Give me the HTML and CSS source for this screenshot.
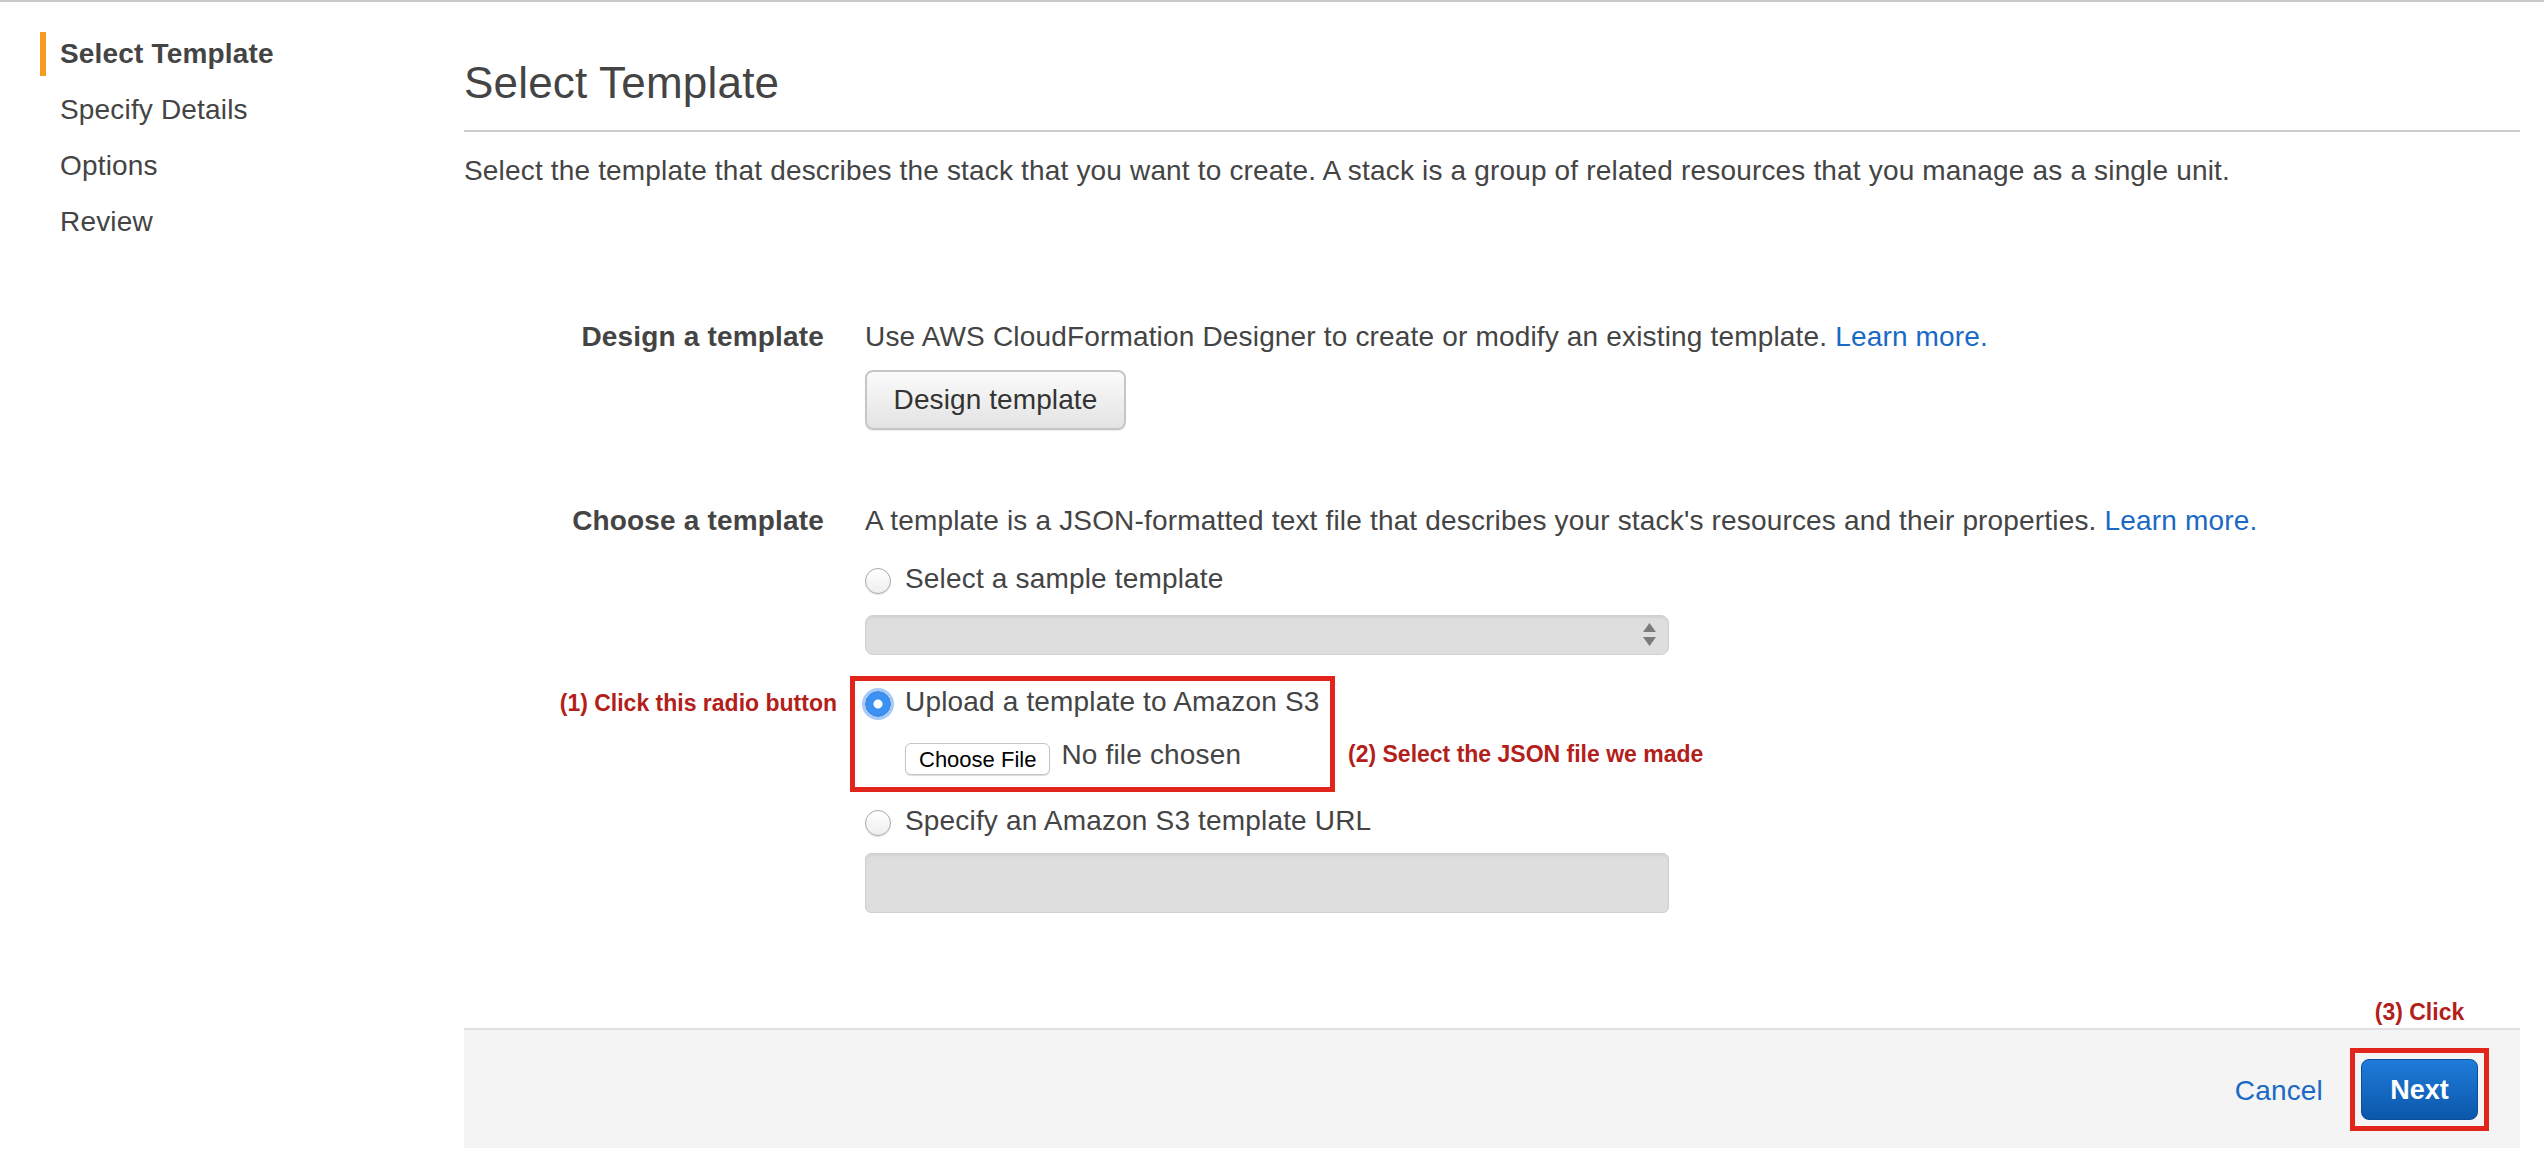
FILE: index.html
```html
<!DOCTYPE html>
<html lang="en">
<head>
<meta charset="utf-8">
<title>Select Template</title>
<link rel="stylesheet" href="styles.css">
</head>
<body>
<div class="topbar"></div>
<div class="page">
  <nav class="steps">
    <div class="step active">Select Template</div>
    <div class="step">Specify Details</div>
    <div class="step">Options</div>
    <div class="step">Review</div>
  </nav>
  <main class="main">
    <h1 class="title">Select Template</h1>
    <p class="intro">Select the template that describes the stack that you want to create. A stack is a group of related resources that you manage as a single unit.</p>

    <div class="form">
      <div class="row row-design">
        <div class="label">Design a template</div>
        <div class="field">
          <div class="desc">Use AWS CloudFormation Designer to create or modify an existing template. <a class="link" href="#">Learn more.</a></div>
          <button class="btn" type="button">Design template</button>
        </div>
      </div>

      <div class="row row-choose">
        <div class="label">Choose a template</div>
        <div class="field">
          <div class="desc">A template is a JSON-formatted text file that describes your stack's resources and their properties. <a class="link" href="#">Learn more.</a></div>
          <div class="option option-first"><span class="radio"></span>Select a sample template</div>
          <div class="select">
            <svg class="arrows" width="13" height="24" viewBox="0 0 13 24"><polygon points="6.5,0 13,9 0,9" fill="#7b7b7b"/><polygon points="0,14 13,14 6.5,23" fill="#7b7b7b"/></svg>
          </div>
          <div class="callout">
            <span class="note note-1">(1) Click this radio button</span>
            <div class="option"><span class="radio checked"></span>Upload a template to Amazon S3</div>
            <div class="file-row"><span class="file-btn">Choose File</span><span class="file-name">No file chosen</span></div>
            <span class="note note-2">(2) Select the JSON file we made</span>
          </div>
          <div class="option option-url"><span class="radio"></span>Specify an Amazon S3 template URL</div>
          <div class="text-input"></div>
        </div>
      </div>
    </div>

    <footer class="footer">
      <a class="cancel" href="#">Cancel</a>
      <div class="next-box">
        <span class="note note-3">(3) Click</span>
        <button class="btn-primary" type="button">Next</button>
      </div>
    </footer>
  </main>
</div>
</body>
</html>
```

FILE: styles.css
```css
html, body {
  margin: 0;
  padding: 0;
  background: #ffffff;
}

body {
  font-family: "Liberation Sans", Arial, Helvetica, sans-serif;
  font-size: 28px;
  letter-spacing: 0.17px;
  color: #444444;
}

.topbar {
  height: 2px;
  background: #c9c9c9;
}

.page {
  display: flex;
}

/* ---------- left steps ---------- */
.steps {
  flex: none;
  width: 464px;
  padding-top: 30px;
  box-sizing: border-box;
}

.step {
  margin-left: 40px;
  height: 44px;
  line-height: 44px;
  border-left: 6px solid transparent;
  padding-left: 14px;
  margin-bottom: 12px;
  white-space: nowrap;
}

.step.active {
  border-left-color: #f89a1f;
  font-weight: bold;
}

/* ---------- main ---------- */
.main {
  flex: none;
  width: 2056px;
}

.title {
  margin: 56px 0 0;
  font-size: 44px;
  letter-spacing: 0.2px;
  line-height: 50px;
  font-weight: normal;
  padding-bottom: 22px;
  border-bottom: 2px solid #cccccc;
}

.intro {
  margin: 19px 0 0;
  line-height: 40px;
}

.form {
  margin-top: 126px;
}

.row {
  display: grid;
  grid-template-columns: 360px 1fr;
  column-gap: 41px;
}

.row-choose {
  margin-top: 71px;
}

.label {
  text-align: right;
  font-weight: bold;
  line-height: 40px;
  white-space: nowrap;
}

.field {
  display: flex;
  flex-direction: column;
  align-items: flex-start;
}

.desc {
  line-height: 40px;
  white-space: nowrap;
}

.link {
  color: #1a69c4;
  text-decoration: none;
}

.btn {
  margin-top: 13px;
  width: 261px;
  height: 60px;
  box-sizing: border-box;
  font-family: inherit;
  font-size: 28px;
  letter-spacing: 0.1px;
  color: #333333;
  background: linear-gradient(#fbfbfb, #e3e3e3);
  border: 2px solid #c6c6c6;
  border-radius: 8px;
  box-shadow: 0 1px 1px rgba(0, 0, 0, 0.08);
  padding: 0;
}

/* radio options */
.option {
  display: flex;
  align-items: center;
  line-height: 40px;
  white-space: nowrap;
}

.option-first {
  margin-top: 18px;
}

.option-url {
  margin-top: 9px;
}

.radio {
  flex: none;
  width: 26px;
  height: 26px;
  box-sizing: border-box;
  border-radius: 50%;
  margin-right: 14px;
  margin-top: 4px;
  border: 1px solid #a9a9a9;
  background: linear-gradient(#ffffff, #eeeeee);
  box-shadow: 0 1px 1px rgba(0, 0, 0, 0.12);
}

.radio.checked {
  border: 1px solid #3583e0;
  background: radial-gradient(circle, #ffffff 0, #ffffff 4px, #3d93f3 5px, #3b8ef0 100%);
  box-shadow: 0 0 0 3px #a6cbf6;
}

/* select */
.select {
  margin-top: 16px;
  width: 804px;
  height: 40px;
  box-sizing: border-box;
  background: #dedede;
  border: 1px solid #d0d0d0;
  border-radius: 8px;
  box-shadow: inset 0 2px 2px rgba(0, 0, 0, 0.05);
  display: flex;
  align-items: center;
  justify-content: flex-end;
  padding-right: 12px;
}

/* red callout */
.callout {
  position: relative;
  margin-top: 21px;
  margin-left: -15px;
  width: 485px;
  box-sizing: border-box;
  border: 5px solid #e1251b;
  padding: 1px 0 10px 10px;
}

.file-row {
  margin-top: 15px;
  margin-left: 40px;
  height: 40px;
  display: flex;
  align-items: center;
}

.file-btn {
  height: 32px;
  line-height: 32px;
  box-sizing: border-box;
  padding: 0 13px;
  font-size: 22px;
  letter-spacing: 0;
  color: #000000;
  background: #ffffff;
  border: 1px solid #c6c6c6;
  border-radius: 6px;
  box-shadow: 0 1px 1px rgba(0, 0, 0, 0.15);
  margin-top: 4px;
}

.file-name {
  margin-left: 11px;
  margin-bottom: 4px;
}

/* annotations */
.note {
  position: absolute;
  font-size: 23px;
  font-weight: bold;
  letter-spacing: 0;
  line-height: 40px;
  color: #b3201a;
  white-space: nowrap;
}

.note-1 {
  right: calc(100% + 18px);
  top: 2px;
}

.note-2 {
  left: calc(100% + 18px);
  top: 53px;
}

.note-3 {
  left: -20px;
  right: -20px;
  text-align: center;
  line-height: 28px;
  bottom: calc(100% + 27px);
}

.text-input {
  margin-top: 12px;
  width: 804px;
  height: 60px;
  box-sizing: border-box;
  background: #dedede;
  border: 1px solid #d0d0d0;
  border-radius: 6px;
  box-shadow: inset 0 2px 2px rgba(0, 0, 0, 0.05);
}

/* footer */
.footer {
  margin-top: 115px;
  height: 120px;
  box-sizing: border-box;
  border-top: 2px solid #e1e1e1;
  background: #f4f4f4;
  display: flex;
  justify-content: flex-end;
  align-items: center;
  padding-right: 31px;
}

.cancel {
  color: #1a69c4;
  text-decoration: none;
  margin-right: 27px;
  padding-top: 3px;
}

.next-box {
  position: relative;
  border: 5px solid #e1251b;
  padding: 6px;
  display: flex;
}

.btn-primary {
  width: 117px;
  height: 61px;
  box-sizing: border-box;
  font-family: inherit;
  font-size: 27px;
  font-weight: bold;
  letter-spacing: 0;
  color: #ffffff;
  background: linear-gradient(#1f7cd9, #0b57aa);
  border: 1px solid #0a4f9b;
  border-radius: 8px;
  padding: 2px 0 0;
}
```
